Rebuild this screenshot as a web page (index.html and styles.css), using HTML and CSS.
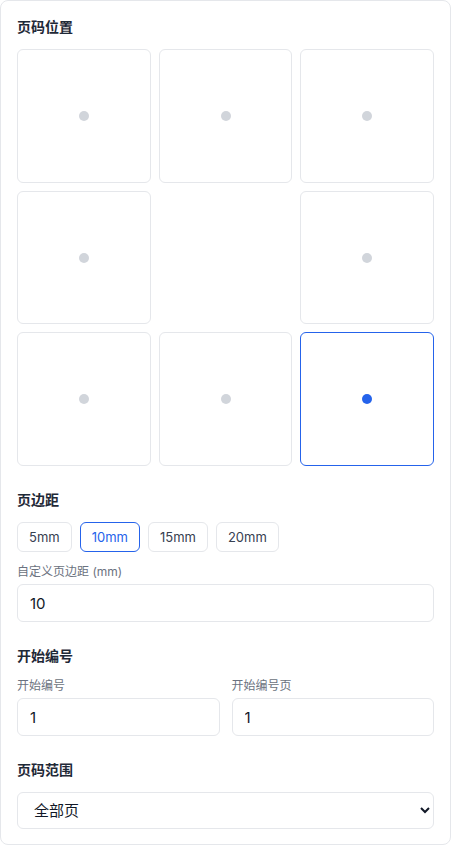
FILE: index.html
```html
<!DOCTYPE html>
<html lang="zh">
<head>
<meta charset="utf-8">
<link rel="stylesheet" href="styles.css">
</head>
<body>
<div class="card">
  <section class="section">
    <h3 class="title">页码位置</h3>
    <div class="pos-grid">
      <div class="cell"><span class="dot"></span></div>
      <div class="cell"><span class="dot"></span></div>
      <div class="cell"><span class="dot"></span></div>
      <div class="cell"><span class="dot"></span></div>
      <div class="cell empty"></div>
      <div class="cell"><span class="dot"></span></div>
      <div class="cell"><span class="dot"></span></div>
      <div class="cell"><span class="dot"></span></div>
      <div class="cell active"><span class="dot"></span></div>
    </div>
  </section>

  <section class="section">
    <h3 class="title">页边距</h3>
    <div class="chips">
      <button class="chip">5mm</button>
      <button class="chip active">10mm</button>
      <button class="chip">15mm</button>
      <button class="chip">20mm</button>
    </div>
    <label class="label">自定义页边距 (mm)</label>
    <input class="input" type="text" value="10">
  </section>

  <section class="section">
    <h3 class="title">开始编号</h3>
    <div class="two">
      <div class="field">
        <label class="label">开始编号</label>
        <input class="input" type="text" value="1">
      </div>
      <div class="field">
        <label class="label">开始编号页</label>
        <input class="input" type="text" value="1">
      </div>
    </div>
  </section>

  <section class="section">
    <h3 class="title">页码范围</h3>
    <select class="select">
      <option>全部页</option>
    </select>
  </section>
</div>
</body>
</html>
```

FILE: styles.css
```css
* { box-sizing: border-box; }
html, body { margin: 0; padding: 0; background: #fff; }
body {
  font-family: Inter, "Noto Sans CJK SC", sans-serif;
  color: #111827;
  width: 451px;
  height: 846px;
}
.card {
  width: 451px;
  height: 845px;
  border: 1px solid #e5e7eb;
  border-radius: 8px;
  padding: 16px;
  background: #fff;
}
.section + .section { margin-top: 24px; }
.title {
  margin: 0 0 12px;
  font-size: 14px;
  line-height: 20px;
  font-weight: 700;
  color: #1f2937;
}
.pos-grid {
  display: grid;
  grid-template-columns: repeat(3, 1fr);
  gap: 8px;
}
.cell {
  aspect-ratio: 1 / 1;
  border: 1px solid #e5e7eb;
  border-radius: 6px;
  display: flex;
  align-items: center;
  justify-content: center;
}
.cell.empty { border-color: transparent; }
.cell.active { border-color: #2563eb; }
.dot {
  width: 10px;
  height: 10px;
  border-radius: 50%;
  background: #d1d5db;
}
.cell.active .dot { background: #2563eb; }
.chips {
  display: flex;
  gap: 8px;
  margin-bottom: 12px;
}
.chip {
  font-family: Inter, "Noto Sans CJK SC", sans-serif;
  font-size: 13px;
  line-height: 20px;
  padding: 4px 11px;
  border: 1px solid #e5e7eb;
  border-radius: 6px;
  background: #fff;
  color: #374151;
}
.chip.active {
  border-color: #2563eb;
  color: #2563eb;
}
.label {
  display: block;
  font-size: 12px;
  line-height: 16px;
  color: #6b7280;
  margin-bottom: 4px;
}
.input, .select {
  display: block;
  width: 100%;
  height: 38px;
  border: 1px solid #e5e7eb;
  border-radius: 6px;
  padding: 0 12px;
  font-family: Inter, "Noto Sans CJK SC", sans-serif;
  font-size: 15px;
  color: #111827;
  background: #fff;
  outline: none;
}
.two {
  display: grid;
  grid-template-columns: 1fr 1fr;
  gap: 12px;
}
.select {
  height: 37px;
}
```
